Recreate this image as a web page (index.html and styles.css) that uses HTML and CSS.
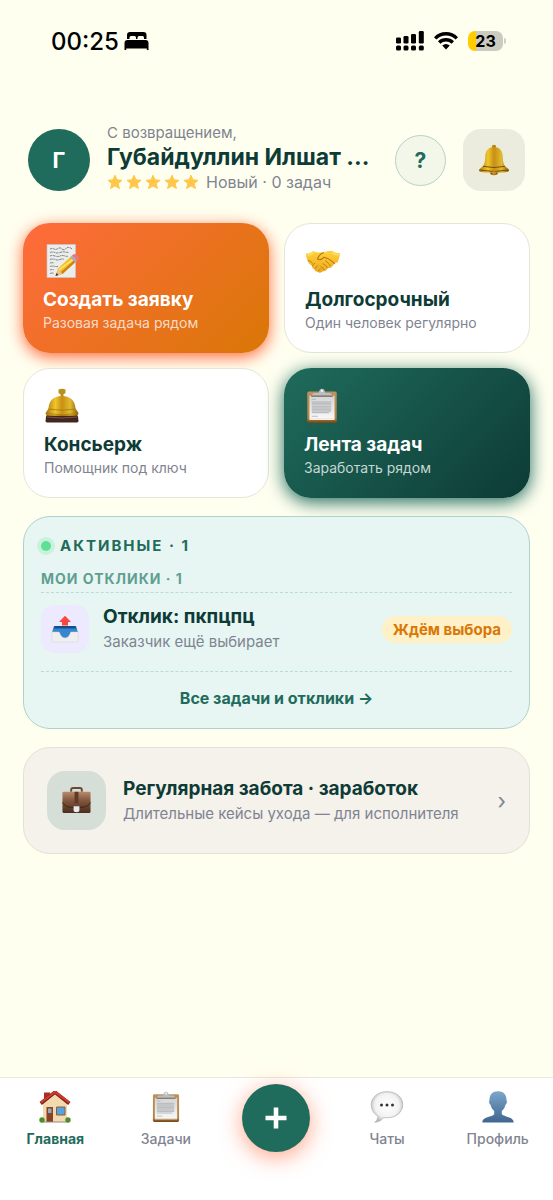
FILE: index.html
```html
<!DOCTYPE html>
<html lang="ru">
<head>
<meta charset="utf-8">
<meta name="viewport" content="width=device-width, initial-scale=1">
<title>Главная</title>
<link rel="stylesheet" href="styles.css">
</head>
<body>
<svg class="defs" width="0" height="0" aria-hidden="true">
  <defs>
    <linearGradient id="gold" x1="0" x2="1" y1="0" y2="0"><stop offset="0" stop-color="#a87412"/><stop offset=".3" stop-color="#f0c62c"/><stop offset=".5" stop-color="#c78f14"/><stop offset=".75" stop-color="#e0ba30"/><stop offset="1" stop-color="#875a08"/></linearGradient>
    <linearGradient id="paper" x1="0" x2="0" y1="0" y2="1"><stop offset="0" stop-color="#d3d4d6"/><stop offset="1" stop-color="#f8f8f8"/></linearGradient>
    <linearGradient id="wood" x1="0" x2="0" y1="0" y2="1"><stop offset="0" stop-color="#c0925a"/><stop offset=".85" stop-color="#b5853f"/><stop offset="1" stop-color="#704317"/></linearGradient>
    <linearGradient id="person" x1="0" x2="0" y1="0" y2="1"><stop offset="0" stop-color="#7ba7cb"/><stop offset="1" stop-color="#40658f"/></linearGradient>
    <linearGradient id="leather" x1="0" x2="0" y1="0" y2="1"><stop offset="0" stop-color="#b98a6c"/><stop offset=".4" stop-color="#82583f"/><stop offset="1" stop-color="#4d2c1d"/></linearGradient>
    <linearGradient id="hand" x1="0" x2="0" y1="0" y2="1"><stop offset="0" stop-color="#ffd33a"/><stop offset="1" stop-color="#eda81f"/></linearGradient>
    <radialGradient id="bubble" cx=".5" cy=".45" r=".55"><stop offset="0" stop-color="#fff"/><stop offset=".7" stop-color="#f2f2f2"/><stop offset="1" stop-color="#b9b9b9"/></radialGradient>
    <symbol id="clipboard" viewBox="-2.500 -.5 35 35">
      <rect x=".7" y="3" width="28.6" height="30.5" rx="1.6" fill="url(#wood)"/>
      <path d="M2.800 7h24.400v22.500H2.800z" fill="url(#paper)"/>
      <path d="M2.800 29.500h24.400v1H2.800z" fill="#fff"/>
      <path d="M5 10.500h4M5 27h6" stroke="#aaa" stroke-width=".7"/>
      <path d="M5 13h19M5 14.500h19M5 16h19M5 17.500h19M5 19h19M5 20.500h19M5 22h19M5 23.500h17" stroke="#bbbdbf" stroke-width="1.200"/>
      <path d="M4.500 6.800h21v1.200h-21z" fill="#6d665d"/>
      <path d="M5 6.500q.5-2 3-2.200h4q.3-4 3-4t3 4h4q2.500.2 3 2.200z" fill="#b9bfc7"/>
      <circle cx="15" cy="2.300" r="1.100" fill="#eef3f7"/>
    </symbol>
    <symbol id="star" viewBox="0 0 16 16"><path d="M8 1.200l2 4.600 5 .5-3.800 3.300 1.200 4.900L8 11.900l-4.400 2.600 1.200-4.900L1 6.300l5-.5z" fill="#ffc84a" stroke="#ffc84a" stroke-width="1" stroke-linejoin="round"/></symbol>
  </defs>
</svg>

<div class="statusbar">
  <div class="status-left">
    <span class="clock">00:25</span>
    <svg width="25" height="18" viewBox="0 0 25 18" aria-hidden="true">
      <path d="M3 7V3Q3 0 6 0H19.500Q22.500 0 22.500 3V7H20V5.500Q20 4 18.500 4H15Q13.500 4 13.500 5.500V7H12V5.500Q12 4 10.500 4H7Q5.500 4 5.500 5.500V7Z"/>
      <path d="M.5 18V11Q.5 8 3.500 8h18q3 0 3 3v7H22.800v-1.500H2.200V18z"/>
    </svg>
  </div>
  <div class="status-right">
    <svg width="28" height="20" viewBox="0 0 28 20" aria-hidden="true">
      <rect y="6.500" width="5" height="6" rx="1.300"/><rect x="7.500" y="5" width="5" height="7.500" rx="1.300"/><rect x="15" y="3" width="5" height="9.500" rx="1.300"/><rect x="22.800" width="5" height="12.500" rx="1.300"/>
      <rect y="14.500" width="5" height="5" rx="1.500"/><rect x="7.500" y="14.500" width="5" height="5" rx="1.500"/><rect x="15" y="14.500" width="5" height="5" rx="1.500"/><rect x="22.800" y="14.500" width="5" height="5" rx="1.500"/>
    </svg>
    <svg width="24" height="18" viewBox="0 0 24 18" aria-hidden="true">
      <g fill="none" stroke="#000" stroke-width="3.400"><path d="M1.200 6.400Q5.700 1.800 12 1.800t10.800 4.600"/><path d="M5.200 10.500Q8 7.700 12 7.700t6.800 2.800"/></g>
      <path d="M8.200 13.600Q12 10.400 15.800 13.600L12 17.600z"/>
    </svg>
    <div class="battery"><span class="battery-level">23</span></div>
  </div>
</div>

<header class="header">
  <div class="avatar">Г</div>
  <div class="who">
    <p class="hello">С возвращением,</p>
    <h1 class="name">Губайдуллин Илшат ...</h1>
    <div class="rating">
      <span class="stars" role="img" aria-label="5 звёзд">
        <svg width="16" height="16"><use href="#star"/></svg><svg width="16" height="16"><use href="#star"/></svg><svg width="16" height="16"><use href="#star"/></svg><svg width="16" height="16"><use href="#star"/></svg><svg width="16" height="16"><use href="#star"/></svg>
      </span>
      <span>Новый · 0 задач</span>
    </div>
  </div>
  <button class="help" type="button">?</button>
  <button class="bell" type="button" aria-label="Уведомления">
    <svg width="32" height="32" viewBox="0 0 32 32">
      <circle cx="16" cy="3" r="2.200" fill="#b98216"/>
      <ellipse cx="16" cy="28.500" rx="4" ry="2.700" fill="#8a540e"/>
      <path d="M16 3C10 3 7.500 7 7.300 12c-.2 6-.8 9-3.300 11-2.300 2-3.300 2.700-3 3.700.5 1.400 5 2 15 2s14.500-.6 15-2c.3-1-.7-1.700-3-3.700-2.500-2-3.100-5-3.300-11C24.500 7 22 3 16 3z" fill="url(#gold)"/>
      <path d="M5 22.300q11 2.500 22 0M1.500 26q14.500 3 29 0" fill="none" stroke="#7b4d0a" stroke-width="1"/>
      <circle cx="16" cy="29" r="2" fill="#c98b28"/>
    </svg>
  </button>
</header>

<main class="content">
  <section class="tiles">
    <button class="tile tile-orange" type="button">
      <svg class="tile-icon" width="36" height="36" viewBox="0 0 36 36" aria-hidden="true">
        <path d="M4 1.500h28.500v33H4z" fill="#ebecec" stroke="#c9c9c9" stroke-width=".6"/>
        <path d="M7 6q2-1 4 0t4-.5 4 .5 4-.5 6 .3M7 9.500q3-1 5 0t5 0 5-.5 4 .5M7 13q2-1 5 0t5 0 5 0 3-.3M7 16.500q3-1 5 0t5 0 4 0M7 20q3-.6 4 0M7 23.500q3-1 5 0h3M7 27q2-1 4 0M7 30.500q3-1 4 0" fill="none" stroke="#777" stroke-width=".9" stroke-dasharray="2.500 .6"/>
        <path d="M12.500 33l2.500-7.500L28 13.500l5 5L19.500 31z" fill="#f6bd24"/>
        <path d="M14.500 28l16-12" stroke="#ffe168" stroke-width="1.800"/>
        <path d="M19.500 31L33 18.500l-1.500-1.500L17.500 29.500z" fill="#cb8217"/>
        <path d="M12.500 33l2.500-7.500 4.500 5.500z" fill="#e8c18d"/><path d="M12.500 33l1-3 2 2z" fill="#333"/>
        <path d="M27 14.500l1.800-1.700 5.200 5-1.700 1.600z" fill="#a7afb5"/>
        <path d="M28.800 12.800q2-2.500 4.500-1.300t2.500 3.500-1.800 2.800z" fill="#e57882"/>
      </svg>
      <span class="tile-title">Создать заявку</span>
      <span class="tile-sub">Разовая задача рядом</span>
    </button>
    <button class="tile tile-white" type="button">
      <svg class="tile-icon" width="36" height="36" viewBox="0 0 36 36" aria-hidden="true">
        <path d="M1 10.500q4 .5 7-2.500 3 2 7 1.200l4 .2q5-2.500 9-1.200 3 2.500 7 2-.4 5-2.300 9-2.700.3-4.200 2.500-2 3.500-5.500 3.600-2 3-5 3-3 2.800-5.500.2-3 .5-3-2.300-2.800-.6-2.500-3.200Q3 20 2.800 18.500 1 14 1 10.500z" fill="url(#hand)"/>
        <path d="M19 9.500q-5 1.500-6.500 6.500 3.500 2 6.500-1.800 6 1.500 10.800 6.600" fill="none" stroke="#b9780e" stroke-width="1.100"/>
        <path d="M20 17.500q4 2.500 5.500 5.500M17.500 20.500q4 1.500 5 4.500M15.500 23.500q3 1 3.500 3.500M7 23l3-3M9.500 26l3.500-3.500M13 28.500l2.500-2.800M3 17.500q3 0 4.500 3" fill="none" stroke="#c4830f" stroke-width="1"/>
        <path d="M2.500 12q3.500 0 6-2.500M27 9.500q3 2.500 6.500 2.500" fill="none" stroke="#ffe36f" stroke-width="1.200"/>
      </svg>
      <span class="tile-title">Долгосрочный</span>
      <span class="tile-sub">Один человек регулярно</span>
    </button>
    <button class="tile tile-white" type="button">
      <svg class="tile-icon" width="36" height="36" viewBox="0 0 36 36" aria-hidden="true">
        <path d="M2 29q0-2.500 3-2.500h26q3 0 3 2.500l.5 4q0 1.500-3 1.500h-27q-3 0-3-1.500z" fill="#42251d"/>
        <path d="M3 29q15 2 30 0" stroke="#805143" stroke-width="1" fill="none"/>
        <path d="M14.500 1.500q3.500-1.500 7 0v3.500l-2 1.200V9h-3V6.200l-2-1.200z" fill="#b8911b"/>
        <path d="M18 8C9 8 5 13 4.500 20.500L1.500 25q0 2.500 3.500 2.700h26q3.500-.2 3.500-2.700l-3-4.500C31 13 27 8 18 8z" fill="url(#gold)"/>
        <path d="M4.500 21q13.500 2.500 27 0M2 25.500q16 2.500 32 0" stroke="#aa7811" stroke-width=".8" fill="none"/>
      </svg>
      <span class="tile-title">Консьерж</span>
      <span class="tile-sub">Помощник под ключ</span>
    </button>
    <button class="tile tile-green" type="button">
      <svg class="tile-icon" width="36" height="36" aria-hidden="true"><use href="#clipboard"/></svg>
      <span class="tile-title">Лента задач</span>
      <span class="tile-sub">Заработать рядом</span>
    </button>
  </section>

  <section class="active">
    <h2 class="active-title"><span class="dot"></span>Активные · 1</h2>
    <h3 class="active-group">Мои отклики · 1</h3>
    <div class="response">
      <div class="response-icon">
        <svg width="28" height="28" viewBox="0 0 28 28" aria-hidden="true">
          <path d="M3 11h22l2 7H1z" fill="#236fb8"/>
          <path d="M4 11h20l1 3H3z" fill="#164f85"/>
          <path d="M1.500 17.500L3 13.500h22l1.500 4-7 .5q-1.500 5-5.500 5t-5.500-5z" fill="#3687d2"/>
          <path d="M.8 17h7.400q1.800 6 5.800 6t5.800-6h7.400v9q0 1-1 1H1.800q-1 0-1-1z" fill="#f0efef" stroke="#d2d0d4" stroke-width=".5"/>
          <path d="M14 .7l6 6.300h-3v3.500h-6V7H8z" fill="#f9463f"/>
        </svg>
      </div>
      <div class="grow">
        <p class="item-title">Отклик: пкпцпц</p>
        <p class="item-sub">Заказчик ещё выбирает</p>
      </div>
      <span class="badge">Ждём выбора</span>
    </div>
    <a class="all-link" href="#">Все задачи и отклики →</a>
  </section>

  <a class="care" href="#">
    <span class="care-icon">
      <svg width="31" height="31" viewBox="0 0 32 32" aria-hidden="true">
        <path d="M10.500 7V5q0-2 2-2h7q2 0 2 2v2" fill="none" stroke="#6c4632" stroke-width="2"/>
        <rect x="1.500" y="7" width="29" height="22" rx="1.500" fill="url(#leather)"/>
        <path d="M1.500 18q3 5 9 5h11q6 0 9-5" fill="none" stroke="#402217" stroke-width="1"/>
        <path d="M14 7h4v12h-4z" fill="#5f3a29"/>
        <path d="M13 22h6v4q0 2-3 2t-3-2z" fill="#e6e9ed"/>
      </svg>
    </span>
    <span class="grow">
      <span class="item-title">Регулярная забота · заработок</span>
      <span class="item-sub">Длительные кейсы ухода — для исполнителя</span>
    </span>
    <span class="chevron">›</span>
  </a>
</main>

<nav class="tabbar">
  <a class="tab tab-current" href="#">
    <svg width="32" height="32" viewBox="0 0 32 32" aria-hidden="true">
      <path d="M5 9V1.500h6V7z" fill="#a82f28"/>
      <path d="M4 12L16 2.500 28 12v19H4z" fill="#f2d9ae"/>
      <path d="M1.700 12.500L16 1.200l14.300 11.300" fill="none" stroke="#74201e" stroke-width="3.600"/>
      <path d="M1.700 11.700L16 .9l14.300 10.800" fill="none" stroke="#d5392e" stroke-width="2.200"/>
      <path d="M7.500 16h6.500v15H7.500z" fill="#8b4127"/><path d="M9 17.500h3.500V22H9z" fill="#8caec0"/>
      <path d="M17.500 16h8.500v8h-8.500z" fill="#54a3df" stroke="#85613f" stroke-width="1"/>
      <path d="M4 30.500h24v1H4z" fill="#938d83"/>
      <circle cx="3" cy="29" r="2.700" fill="#4d8c29"/><circle cx="29" cy="29" r="2.700" fill="#4d8c29"/>
    </svg>
    <span>Главная</span>
  </a>
  <a class="tab" href="#"><svg width="32" height="32" aria-hidden="true"><use href="#clipboard"/></svg><span>Задачи</span></a>
  <div class="tab-add">
    <button class="fab" type="button" aria-label="Создать">
      <svg width="22" height="22" viewBox="0 0 22 22"><path d="M11 .5v21M.5 11h21" stroke="#fff" stroke-width="4.600"/></svg>
    </button>
  </div>
  <a class="tab" href="#">
    <svg width="34" height="32" viewBox="0 0 34 32" aria-hidden="true">
      <path d="M17 .7C7.500.7 1.300 6.500 1.300 13.500c0 6 3 9.500 6.500 11.500.4 2.500-1 4.500-3 6.200 4 0 7-2 8.700-4.700q1.700.3 3.500.3c9.500 0 15.700-6 15.700-13.300S26.500.7 17 .7z" fill="url(#bubble)" stroke="#b5b5b5" stroke-width=".8"/>
      <g fill="#333"><circle cx="11.500" cy="14" r="1.500"/><circle cx="17" cy="14" r="1.500"/><circle cx="22.500" cy="14" r="1.500"/></g>
    </svg>
    <span>Чаты</span>
  </a>
  <a class="tab" href="#">
    <svg width="32" height="32" viewBox="0 0 32 32" aria-hidden="true"><path d="M16 .3c-5.500 0-8.700 3.700-8.500 9-1 1.500 0 4 1 4.500.7 3 2 4.700 3.700 6.200v3.200C10 26 .3 25.500.3 31.500h31.400c0-6-9.700-5.500-11.900-8.300V20c1.700-1.500 3-3.200 3.700-6.200 1-.5 2-3 1-4.500.2-5.300-3-9-8.500-9z" fill="url(#person)"/></svg>
    <span>Профиль</span>
  </a>
</nav>
</body>
</html>
```
FILE: styles.css
```css
* { box-sizing: border-box; }

body {
  margin: 0;
  min-height: 100vh;
  display: flex;
  flex-direction: column;
  background: #fffff0;
  color: #0d3b36;
  font-family: Inter, "Liberation Sans", sans-serif;
}

h1, h2, h3, p { margin: 0; }
button { font: inherit; color: inherit; padding: 0; border: 0; cursor: pointer; }
a { color: inherit; text-decoration: none; }
svg { display: block; flex: none; }
.defs { position: absolute; }
.grow { flex: 1; min-width: 0; }

.statusbar {
  display: flex;
  justify-content: space-between;
  align-items: center;
  height: 82px;
  padding: 0 47px 0 51px;
  color: #000;
}
.status-left { display: flex; align-items: center; gap: 5px; }
.clock { font-size: 24px; font-weight: 500; }
.status-right { display: flex; align-items: center; gap: 10px; }
.battery {
  display: flex;
  align-items: center;
  gap: 1px;
}
.battery::after {
  content: "";
  width: 2px;
  height: 6px;
  border-radius: 0 2px 2px 0;
  background: #cfcfc4;
}
.battery-level {
  width: 35px;
  border-radius: 7px;
  background: linear-gradient(90deg, #fc0 8px, #cbcbc0 8px);
  font-size: 16px;
  line-height: 20px;
  font-weight: 700;
  text-align: center;
}

.header {
  display: flex;
  align-items: center;
  gap: 17px;
  padding: 41px 28px 26px;
}
.avatar {
  flex: none;
  width: 62px;
  height: 62px;
  border-radius: 50%;
  background: #1f6b5c;
  color: #fff;
  font-size: 22px;
  line-height: 62px;
  font-weight: 700;
  text-align: center;
}
.who { flex: 1; min-width: 0; padding-bottom: 4px; }
.hello { font-size: 15px; line-height: 20px; color: #7f8491; }
.name {
  font-size: 23px;
  line-height: 28px;
  font-weight: 700;
  white-space: nowrap;
}
.rating {
  display: flex;
  align-items: center;
  gap: 7px;
  font-size: 16px;
  line-height: 22px;
  color: #7f8491;
}
.stars { display: flex; gap: 3px; }
.help {
  flex: none;
  width: 51px;
  height: 51px;
  border: 1px solid #b7d1c5;
  border-radius: 50%;
  background: #f3f7e9;
  color: #1f6b5c;
  font-size: 21px;
  font-weight: 700;
}
.bell {
  flex: none;
  display: grid;
  place-items: center;
  width: 62px;
  height: 62px;
  border-radius: 18px;
  background: #ececde;
}

.content { display: grid; gap: 18px; padding: 0 23px 24px; }
.tiles { display: grid; grid-template-columns: 1fr 1fr; gap: 15px; }
.tile {
  display: flex;
  flex-direction: column;
  align-items: flex-start;
  padding: 20px;
  border-radius: 27px;
  text-align: left;
}
.tile-icon { margin-bottom: 8px; }
.tile-title { font-size: 19px; line-height: 26px; font-weight: 700; }
.tile-sub { font-size: 14px; line-height: 20px; color: #7f8491; }
.tile-orange {
  background: linear-gradient(135deg, #ff6b3d, #d97706);
  box-shadow: 0 4px 16px #ff6b3d;
  color: #fff;
}
.tile-orange .tile-sub { color: #fbdac7; }
.tile-white { padding: 19px 20px; border: 1px solid #e5e5da; background: #fff; }
.tile-green {
  background: linear-gradient(135deg, #1f6b5c, #0d3b36);
  box-shadow: 0 4px 18px #1f6b5c;
  color: #fff;
}
.tile-green .tile-sub { color: #c4d7d3; }

.active {
  padding: 17px;
  border: 1px solid #add3cb;
  border-radius: 27px;
  background: #e7f6f3;
}
.active-title {
  display: flex;
  align-items: center;
  gap: 9px;
  font-size: 15px;
  line-height: 24px;
  letter-spacing: 2px;
  text-transform: uppercase;
  color: #1f6b5c;
}
.dot {
  width: 10px;
  height: 10px;
  border-radius: 50%;
  background: #5fe092;
  box-shadow: 0 0 0 4px #c8f2dd;
}
.active-group {
  padding: 9px 0 1px;
  font-size: 14px;
  line-height: 24px;
  letter-spacing: 1px;
  text-transform: uppercase;
  color: #5f9f92;
}
.response {
  display: flex;
  align-items: center;
  gap: 14px;
  padding: 11px 0 17px;
  border: dashed #b9dcd4;
  border-width: 1px 0;
}
.response-icon {
  display: grid;
  place-items: center;
  width: 48px;
  height: 48px;
  border-radius: 14px;
  background: #ede9fe;
}
.item-title, .item-sub { display: block; }
.item-title { font-size: 19px; line-height: 26px; font-weight: 700; }
.item-sub { font-size: 15px; line-height: 24px; color: #7f8491; }
.badge {
  padding: 0 11px;
  border-radius: 14px;
  background: #fef0c7;
  color: #d97706;
  font-size: 15px;
  line-height: 27px;
  font-weight: 700;
}
.all-link {
  display: block;
  padding-top: 13px;
  font-size: 16px;
  line-height: 26px;
  font-weight: 700;
  text-align: center;
  color: #1f6b5c;
}

.care {
  display: flex;
  align-items: center;
  gap: 17px;
  padding: 23px;
  border: 1px solid #e2e2d6;
  border-radius: 27px;
  background: #f5f1eb;
}
.care-icon {
  display: grid;
  place-items: center;
  width: 59px;
  height: 59px;
  border-radius: 18px;
  background: #d5dfd7;
}
.chevron { font-size: 22px; line-height: 28px; color: #7f8491; }

.tabbar {
  display: grid;
  grid-template-columns: repeat(5, 1fr);
  margin-top: auto;
  padding: 6px 0 48px;
  border-top: 1px solid #e8e8de;
  background: #fff;
}
.tab {
  display: flex;
  flex-direction: column;
  align-items: center;
  gap: 6px;
  padding-top: 7px;
  font-size: 14px;
  line-height: 20px;
  font-weight: 500;
  color: #7f8491;
}
.tab-current { font-weight: 700; color: #1f6b5c; }
.tab-add { display: grid; place-items: start center; }
.fab {
  display: grid;
  place-items: center;
  width: 68px;
  height: 68px;
  border-radius: 50%;
  background: #1f6b5c;
  box-shadow: 0 5px 22px #ff6b3d99;
}
```
